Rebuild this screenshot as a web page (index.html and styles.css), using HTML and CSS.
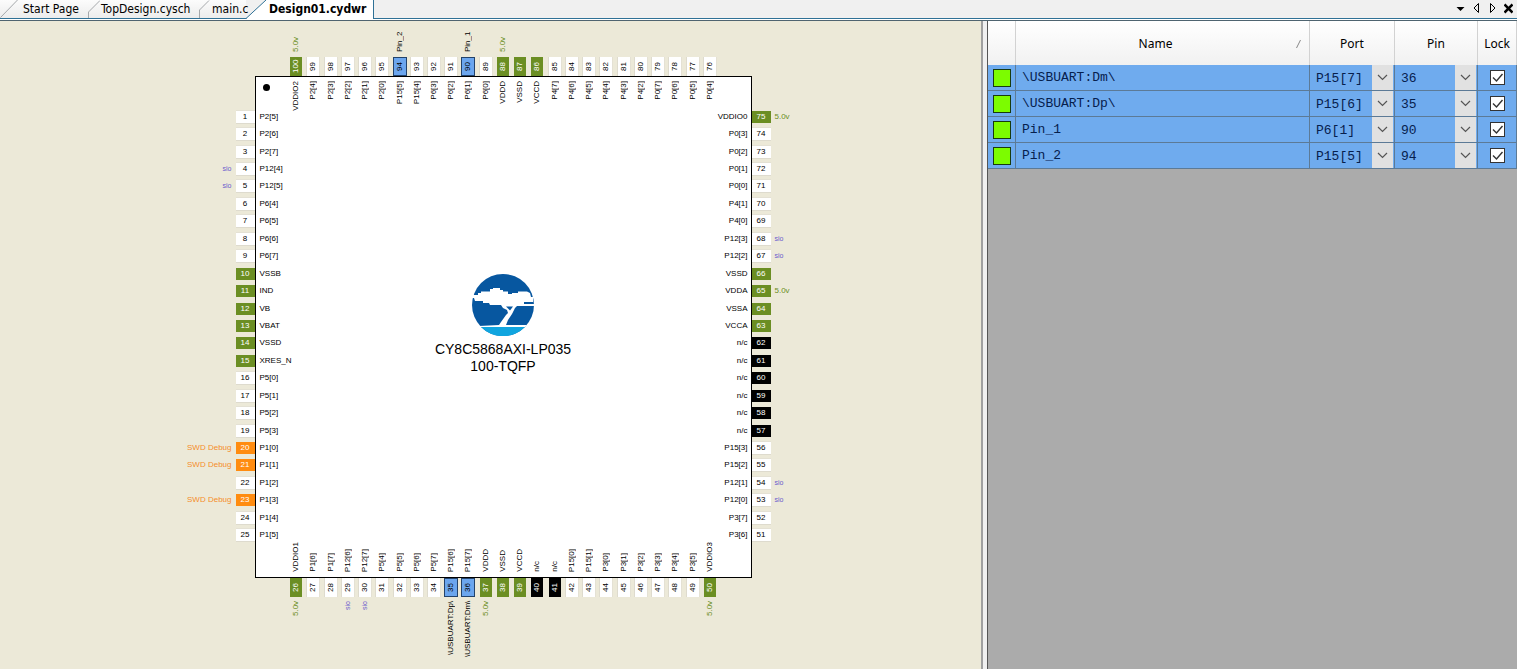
FILE: index.html
```html
<!DOCTYPE html>
<html lang="en">
<head>
<meta charset="utf-8">
<title>Design01.cydwr</title>
<link rel="stylesheet" href="styles.css">
</head>
<body>
<header class="tabbar">
  <nav class="tabs">
    <button class="tab tab-start"><svg class="slant" width="20" height="18"><path d="M0.5 17.5L17.5 0" stroke="#a5a8ab" fill="none"/></svg><span>Start Page</span></button>
    <button class="tab tab-top"><svg class="slant" width="12" height="18"><path d="M0.5 18V12L12 0.5" stroke="#a5a8ab" fill="none"/></svg><span>TopDesign.cysch</span></button>
    <button class="tab tab-main"><svg class="slant" width="12" height="18"><path d="M0.5 18V10L10 0.5" stroke="#a5a8ab" fill="none"/></svg><span>main.c</span></button>
    <button class="tab tab-active"><svg class="slant" width="22" height="19"><path d="M0 19L20 0H22V19Z" fill="#fff"/><path d="M0 18.5L20 0" stroke="#2f7196" fill="none"/></svg><span>Design01.cydwr</span></button>
  </nav>
  <div class="tools">
    <button class="tool" aria-label="Window list"><svg width="9" height="12"><path d="M0.5 5H8.5L4.5 9Z"/></svg></button>
    <button class="tool" aria-label="Previous tab"><svg width="9" height="12"><path d="M6.5 1.5V10.5L2 6Z" fill="none" stroke="#000"/></svg></button>
    <button class="tool" aria-label="Next tab"><svg width="9" height="12"><path d="M2.5 1.5V10.5L7 6Z" fill="none" stroke="#000"/></svg></button>
    <button class="tool" aria-label="Close"><svg width="9" height="12"><path d="M0.5 2.5L8.5 10.5M8.5 2.5L0.5 10.5" stroke="#000" stroke-width="2.5"/></svg></button>
  </div>
</header>
<main class="workspace">
  <section class="board" aria-label="Pin layout">
    <div class="chip">
      <div class="package">
        <span class="dot"></span>
        <svg class="logo" width="62" height="62" viewBox="0 0 62 62">
          <circle cx="31" cy="31" r="31" fill="#0757a0"/>
          <path d="M8.5 52.5H53.5A31 31 0 0 1 8.5 52.5Z" fill="#10a5df"/>
          <path d="M0 21H6V19H9V17.5H18V15H21V14H28V16H31V17.5H36V20H40V19H46V17.5H55L58 19L59 23H61V28H52V30H62V32H45L43 34L40 40L36 46L34 51H55L53 53H8L7 52L27 51L29 48L34 41L36 39L35 36L31 34L29 31H18L17 29H11V27H3L2 24H0Z" fill="#fff"/>
          <path d="M34 32.5H41L38 36.5Z" fill="#0757a0"/>
        </svg>
        <p class="part">CY8C5868AXI-LP035</p>
        <p class="part">100-TQFP</p>
      </div>
      <ol class="side side-left"></ol>
      <ol class="side side-right"></ol>
      <ol class="side side-top"></ol>
      <ol class="side side-bottom"></ol>
    </div>
  </section>
  <section class="signals" aria-label="Signals">
    <table class="grid">
      <colgroup><col class="c-mark"><col><col class="c-port"><col class="c-pin"><col class="c-lock"></colgroup>
      <thead><tr><th></th><th><div class="sortable"><span>Name</span><svg width="8" height="10"><path d="M1.5 9L5.5 1" stroke="#888"/></svg></div></th><th>Port</th><th>Pin</th><th>Lock</th></tr></thead>
      <tbody id="rows"></tbody>
    </table>
  </section>
</main>
<script src="app.js"></script>
</body>
</html>
```
FILE: styles.css
```css
* { box-sizing: border-box; }
body {
  margin: 0;
  height: 100vh;
  display: flex;
  flex-direction: column;
  overflow: hidden;
  background: #f0f0f0;
  color: #000;
  font-family: "Liberation Sans", Arial, sans-serif;
}
button, select { font: inherit; color: inherit; }
.tabbar {
  height: 21px;
  flex: none;
  display: flex;
  justify-content: space-between;
  background: linear-gradient(#f0f0f0 18px, #2f7196 18px, #2f7196 19px, #fff 19px, #fff 20px, #4f6470 20px);
}
.tabs { display: flex; }
.tab {
  height: 18px;
  display: flex;
  padding: 0;
  border: 0;
  background: linear-gradient(#fcfcfc, #ececec);
  font: 12px/18px "DejaVu Sans Condensed", Tahoma, sans-serif;
  white-space: nowrap;
  text-align: left;
}
.slant { flex: none; display: block; }
.tab-start { width: 88px; gap: 3px; }
.tab-top { width: 111px; gap: 1px; }
.tab-main { width: 47px; gap: 1px; }
.tab-active {
  height: 19px;
  gap: 1px;
  padding-right: 7px;
  border-right: 1px solid #2f7196;
  background: linear-gradient(90deg, transparent 20px, #fff 20px);
  font-weight: bold;
}
.tools { display: flex; gap: 6px; padding: 1px 3px 0 0; }
.tool { width: 10px; height: 14px; padding: 0; border: 0; background: none; }
.tool svg { display: block; }

.workspace { flex: 1; min-height: 0; display: flex; gap: 4px; }
.board {
  flex: 1;
  min-width: 0;
  display: flex;
  justify-content: center;
  align-items: flex-start;
  padding-left: 25px;
  border-right: 2px solid #a0a0a0;
  background: #ece9d8;
}
.chip {
  flex: none;
  display: grid;
  grid-template-columns: 76px 497px 76px;
  grid-template-rows: 55px 502px 80px;
}
.package {
  grid-area: 2 / 2;
  position: relative;
  display: flex;
  flex-direction: column;
  align-items: center;
  justify-content: center;
  padding-bottom: 5px;
  border: 1px solid #000;
  background: #fff;
}
.dot {
  position: absolute;
  left: 7px;
  top: 7px;
  width: 7px;
  height: 7px;
  border-radius: 50%;
  background: #000;
}
.logo { margin-bottom: 5px; }
.part { margin: 0; font-size: 14px; line-height: 17px; }

.side {
  margin: 0;
  padding: 0;
  list-style: none;
  display: flex;
  z-index: 1;
  font-size: 8px;
  line-height: 12px;
  white-space: nowrap;
}
.pin { flex: 1; min-width: 0; min-height: 0; display: flex; align-items: center; }
.num {
  flex: none;
  display: block;
  width: 19px;
  height: 12px;
  background: #fff;
  box-shadow: 0 1px #dedbce, 0 -1px #e4e1d4;
  text-align: center;
}
.power .num { background: #6b8e23; color: #fff; box-shadow: none; }
.none .num { background: #000; color: #fff; box-shadow: none; }
.debug .num { background: #ff8c10; color: #fff; box-shadow: none; }
.used .num { background: #6ca6ee; box-shadow: 1px 0 #23436b, -1px 0 #23436b, inset 0 1px #23436b, inset 0 -1px #23436b; }
.power .note { color: #6b8e23; }
.debug .note { color: #f58d2a; }
.sio .note { color: #6a5acd; font-size: 7px; }

.side-left { grid-area: 2 / 1 / 3 / 3; justify-self: start; flex-direction: column; padding: 32px 0 34px; }
.side-left .note { width: 53px; text-align: right; margin-right: 4px; }
.side-left .name { margin-left: 5px; }
.side-right { grid-area: 2 / 2 / 3 / 4; justify-self: end; flex-direction: column; padding: 32px 0 34px; }
.side-right .pin { flex-direction: row-reverse; }
.side-right .note { width: 53px; margin-left: 4px; }
.side-right .name { margin-right: 4px; }

.side-top .note, .side-top .name, .side-top .num,
.side-bottom .note, .side-bottom .name, .side-bottom .num {
  writing-mode: vertical-rl;
  transform: rotate(180deg);
}
.side-top .num, .side-bottom .num { width: 12px; height: 19px; }
.side-top .num, .side-bottom .num { box-shadow: 1px 0 #dedbce, -1px 0 #e4e1d4; }
.side .power .num, .side .none .num { box-shadow: none; }
.side .used .num { box-shadow: 1px 0 #23436b, -1px 0 #23436b, inset 0 1px #23436b, inset 0 -1px #23436b; }
.side-top { grid-area: 1 / 2 / 3 / 3; align-self: start; padding: 0 33px; }
.side-top .pin { flex-direction: column; }
.side-top .note { height: 31px; margin-bottom: 5px; }
.side-top .name { margin-top: 5px; }
.side-bottom { grid-area: 2 / 2 / 4 / 3; align-self: end; padding: 0 33px; }
.side-bottom .pin { flex-direction: column-reverse; }
.side-bottom .note { height: 57px; margin-top: 4px; text-align: right; }
.side-bottom .name { margin-bottom: 6px; }

.signals {
  flex: 0 0 530px;
  min-width: 0;
  border-left: 1px solid #555;
  background: #ababab;
}
.grid { width: 100%; border-collapse: separate; border-spacing: 0; table-layout: fixed; }
.c-mark { width: 28px; }
.c-port { width: 85px; }
.c-pin { width: 83px; }
.c-lock { width: 39px; }
.grid th {
  height: 44px;
  padding: 1px 0 0;
  border-right: 1px solid #d2d2d2;
  background: linear-gradient(#fff, #f1f1f1);
  font: 12px/16px "Noto Sans", sans-serif;
  text-align: center;
}
.sortable { display: flex; align-items: center; padding-right: 6px; }
.sortable span { flex: 1; }
.grid td {
  height: 26px;
  padding: 0;
  border-right: 1px solid #5c7a96;
  border-bottom: 1px solid #5c7a96;
  background: #6fabee;
  color: #06204d;
  font: 13px/25px "Liberation Mono", "Courier New", monospace;
}
.grid .signal { padding: 1px 0 0 6px; line-height: 24px; }
.swatch { display: block; width: 18px; height: 18px; margin: 0 auto; border: 1px solid #173a10; background: #7cfc00; }
.combo { display: grid; grid-template-columns: 1fr 21px; padding-right: 1px; }
.combo select {
  grid-area: 1 / 1 / 2 / 3;
  width: 100%;
  height: 25px;
  padding: 1px 0 0 6px;
  border: 0;
  appearance: none;
  background: transparent;
}
.arrow { grid-area: 1 / 2; width: 21px; height: 25px; background: #e1e1e1; pointer-events: none; }
.lock { display: grid; justify-content: center; align-items: center; }
.lock input {
  grid-area: 1 / 1;
  width: 15px;
  height: 15px;
  margin: 0;
  appearance: none;
  border: 1px solid #333;
  background: #fff;
}
.lock svg { grid-area: 1 / 1; pointer-events: none; }
.lock input:not(:checked) + svg { visibility: hidden; }
```
FILE: app.js
```javascript
// Port names per side, in drawing order (top to bottom, left to right).
const sides = {
  left: { first: 1, step: 1, names: "P2[5] P2[6] P2[7] P12[4] P12[5] P6[4] P6[5] P6[6] P6[7] VSSB IND VB VBAT VSSD XRES_N P5[0] P5[1] P5[2] P5[3] P1[0] P1[1] P1[2] P1[3] P1[4] P1[5]" },
  bottom: { first: 26, step: 1, names: "VDDIO1 P1[6] P1[7] P12[6] P12[7] P5[4] P5[5] P5[6] P5[7] P15[6] P15[7] VDDD VSSD VCCD n/c n/c P15[0] P15[1] P3[0] P3[1] P3[2] P3[3] P3[4] P3[5] VDDIO3" },
  right: { first: 75, step: -1, names: "VDDIO0 P0[3] P0[2] P0[1] P0[0] P4[1] P4[0] P12[3] P12[2] VSSD VDDA VSSA VCCA n/c n/c n/c n/c n/c n/c P15[3] P15[2] P12[1] P12[0] P3[7] P3[6]" },
  top: { first: 100, step: -1, names: "VDDIO2 P2[4] P2[3] P2[2] P2[1] P2[0] P15[5] P15[4] P6[3] P6[2] P6[1] P6[0] VDDD VSSD VCCD P4[7] P4[6] P4[5] P4[4] P4[3] P4[2] P0[7] P0[6] P0[5] P0[4]" }
};
const signals = [
  { name: "\\USBUART:Dm\\", port: "P15[7]", pin: 36 },
  { name: "\\USBUART:Dp\\", port: "P15[6]", pin: 35 },
  { name: "Pin_1", port: "P6[1]", pin: 90 },
  { name: "Pin_2", port: "P15[5]", pin: 94 }
];
const supplied = [26, 37, 50, 65, 75, 88, 100];
const sio = [4, 5, 29, 30, 53, 54, 67, 68];
const debug = [20, 21, 23];

function describe(number, name) {
  const signal = signals.find(s => s.pin === number);
  if (signal) return ["used", signal.name];
  if (sio.includes(number)) return ["sio", "sio"];
  if (debug.includes(number)) return ["debug", "SWD Debug"];
  if (name === "n/c") return ["none", ""];
  if (!name.startsWith("P")) return ["power", supplied.includes(number) ? "5.0v" : ""];
  return ["", ""];
}

for (const [side, { first, step, names }] of Object.entries(sides)) {
  document.querySelector(".side-" + side).innerHTML = names.split(" ").map((name, i) => {
    const number = first + i * step;
    const [kind, note] = describe(number, name);
    return `<li class="pin ${kind}"><span class="note">${note}</span><span class="num">${number}</span><span class="name">${name}</span></li>`;
  }).join("");
}

const combo = (label, value) => `<div class="combo"><select aria-label="${label}"><option>${value}</option></select><svg class="arrow" viewBox="0 0 21 25"><path d="M6 10L10.5 14.5L15 10" fill="none" stroke="#555" stroke-width="1.2"/></svg></div>`;
document.getElementById("rows").innerHTML = signals.map(s => `<tr>
  <td><span class="swatch"></span></td>
  <td class="signal">${s.name}</td>
  <td>${combo("Port of " + s.name, s.port)}</td>
  <td>${combo("Pin of " + s.name, s.pin)}</td>
  <td><label class="lock"><input type="checkbox" checked aria-label="Lock ${s.name}"><svg width="15" height="15"><path d="M3 7.5L6.5 11L12.5 4" fill="none" stroke="#333" stroke-width="1.4"/></svg></label></td>
</tr>`).join("");
```
